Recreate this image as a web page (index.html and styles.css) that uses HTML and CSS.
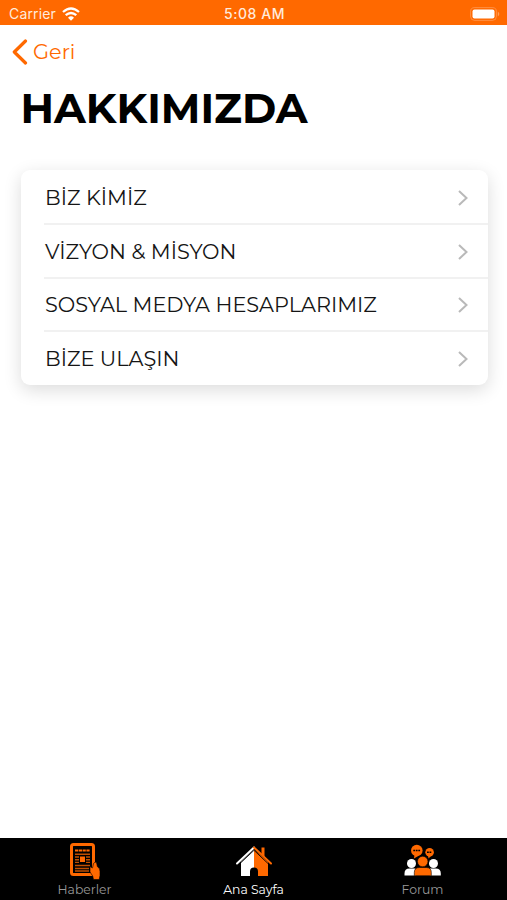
FILE: index.html
```html
<!DOCTYPE html>
<html lang="tr">
<head>
<meta charset="utf-8">
<title>Hakkımızda</title>
<link rel="stylesheet" href="styles.css">
</head>
<body>
<div class="screen">
  <div class="status">
    <div class="carrier"><span>Carrier</span>
      <svg width="18" height="14" viewBox="0 0 18 14" fill="none" stroke="#fff" stroke-width="2.3"><path d="M1 5Q9-2 17 5M3.7 8.2Q9 3.7 14.3 8.2"/><path d="M6 10.7Q9 8 12 10.7L9 13.7Z" fill="#fff" stroke="none"/></svg>
    </div>
    <div class="time">5:08 AM</div>
    <svg class="battery" width="30" height="14" viewBox="0 0 30 14"><rect x=".6" y=".6" width="25.8" height="12.8" rx="4" fill="none" stroke="#fff" stroke-opacity=".25"/><rect x="2.5" y="2.5" width="22" height="9" rx="2" fill="#fff"/><path d="M27.8 4.5q3 2.5 0 5z" fill="#fff" opacity=".35"/></svg>
  </div>
  <nav class="nav">
    <svg width="17" height="26" viewBox="0 0 17 26" fill="none" stroke="#ff6900" stroke-width="3.2" stroke-linecap="round" stroke-linejoin="round"><path d="M14.5 2L3.3 13L14.5 24"/></svg>
    <span class="back">Geri</span>
  </nav>
  <h1>HAKKIMIZDA</h1>
  <ul class="list">
    <li><span class="label">BİZ KİMİZ</span><svg class="chevron" viewBox="0 0 12 18"><path d="M2 2L9.5 9L2 16"/></svg></li>
    <li><span class="label">VİZYON &amp; MİSYON</span><svg class="chevron" viewBox="0 0 12 18"><path d="M2 2L9.5 9L2 16"/></svg></li>
    <li><span class="label">SOSYAL MEDYA HESAPLARIMIZ</span><svg class="chevron" viewBox="0 0 12 18"><path d="M2 2L9.5 9L2 16"/></svg></li>
    <li><span class="label">BİZE ULAŞIN</span><svg class="chevron" viewBox="0 0 12 18"><path d="M2 2L9.5 9L2 16"/></svg></li>
  </ul>
  <footer class="tabs">
    <div class="tab">
      <svg width="32" height="38" viewBox="0 0 32 38"><rect x="2.5" y="1.5" width="22" height="30" rx="2" fill="none" stroke="#ff6900" stroke-width="3"/><g stroke="#ff6900" stroke-width="1.4"><path d="M6 7.5h15" stroke-width="2.2" stroke-dasharray="3.2 .6"/><path d="M6 11.2h15M6 14h4M17 14h4M6 16.7h4M17 16.7h4M6 19.4h4M17 19.4h4M6 22.5h15M6 25.5h14M6 28h14" opacity=".75"/></g><rect x="11" y="13.5" width="5" height="5.5" fill="#ff6900"/><path d="M21 23.5l2.500 1.500 1-4.500q1.500-2.500 3.200-.5l.6 3.500q2.700 1.500 2.700 5v4l-.8 4h-5.700l-.8-3.500-2.700-4z" fill="#ff6900" stroke="#000" stroke-width=".6"/></svg>
      <span>Haberler</span>
    </div>
    <div class="tab active">
      <svg width="38" height="38" viewBox="0 0 38 38"><path d="M19 6.5V24.5q-4 0-4 4V33H6V19z" fill="#fff"/><path d="M19 6.5L33 19v14H23v-4.500q0-4-4-4z" fill="#ff6900"/><path d="M26.500 4.500h3v9.500l-3-3z" fill="#ff6900"/><path d="M5 20.500L19 7.300L33 20.500" stroke="#000" stroke-width=".9" fill="none"/><path d="M2 20.500L19 4.500" stroke="#fff" stroke-width="2" stroke-linecap="round"/><path d="M19 4.500L36 20.500" stroke="#ff6900" stroke-width="2" stroke-linecap="round"/></svg>
      <span>Ana Sayfa</span>
    </div>
    <div class="tab">
      <svg width="38" height="38" viewBox="0 0 38 38"><g fill="#fff"><circle cx="7.5" cy="20.500" r="4.500"/><circle cx="29.500" cy="20.500" r="4.500"/><path d="M.5 32.500v-2q0-5 5-5h6v7zM36.800 32.500v-2q0-5-5-5h-6v7z"/></g><g fill="#ff6900"><circle cx="18.700" cy="18.500" r="5.200" stroke="#000" stroke-width=".5"/><path d="M10.300 32.800v-3.300q0-5 5-5h7q5 0 5 5v3.300z" stroke="#000" stroke-width=".6"/><circle cx="12.800" cy="7.500" r="5.800"/><path d="M10.500 12l-.5 3.500 5-3z"/><circle cx="25.600" cy="9.200" r="4.300"/><path d="M24 12.500l.5 3 3-3z"/></g><path d="M9.300 7.500h7M23 9.200h5" stroke="#000" stroke-width="1.500" stroke-dasharray="1.800 .7"/></svg>
      <span>Forum</span>
    </div>
  </footer>
</div>
</body>
</html>
```
FILE: styles.css
```css
* { box-sizing: border-box; }
body { margin: 0; background: #fff; font-family: "Montserrat", "Inter", sans-serif; color: #151515; }
.screen { height: 900px; display: flex; flex-direction: column; }
.status { height: 25px; flex: none; background: #ff6900; color: #fff; display: grid; grid-template-columns: 1fr auto 1fr; align-items: center; padding: 2px 7px 0 9px; font: 14px/20px "Inter", sans-serif; }
.carrier { display: flex; align-items: center; gap: 6px; color: #ffebdc; letter-spacing: .15px; }
.time { font-weight: 500; font-size: 14px; letter-spacing: .55px; color: #ffebdc; }
.battery { justify-self: end; }
.nav { height: 53px; display: flex; align-items: center; padding-left: 11px; gap: 5px; color: #ff6900; }
.back { font-size: 20.8px; line-height: 26px; }
h1 { margin: 8px 0 0 20.5px; font-size: 41.5px; line-height: 44px; font-weight: 700; color: #000; }
.list { list-style: none; margin: 40px 19px 0 21px; padding: 1px 0 0; height: 215px; background: #fff; border-radius: 9px; box-shadow: 0 5px 18px rgba(0,0,0,.14); }
.list li { height: 53.8px; margin-left: 23px; padding: 2px 19px 0 1px; display: flex; align-items: center; justify-content: space-between; border-bottom: 2px solid #f1f1f1; }
.list li:last-child { border-bottom-color: transparent; }
.label { font-size: 20.8px; line-height: 30px; white-space: nowrap; }
.chevron { width: 12px; height: 18px; fill: none; stroke: #b9b9b9; stroke-width: 2; }
.tabs { margin-top: auto; height: 62px; background: #000; display: grid; grid-template-columns: repeat(3, 1fr); }
.tab { display: flex; flex-direction: column; align-items: center; padding-top: 5px; color: #999; font-size: 12.4px; line-height: 17px; }
.active { color: #fff; }
```
